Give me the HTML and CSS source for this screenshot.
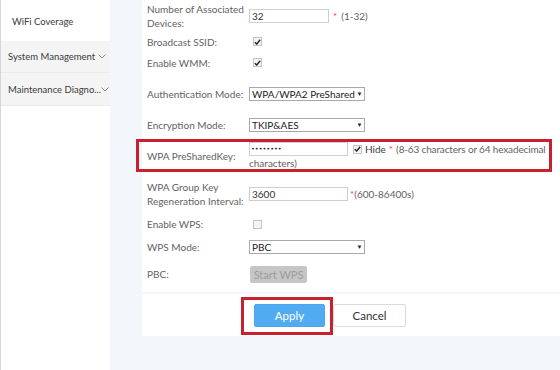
FILE: index.html
```html
<!DOCTYPE html>
<html>
<head>
<meta charset="utf-8">
<link rel="stylesheet" href="styles.css">
</head>
<body>
<div class="app">
  <aside class="sidebar">
    <div class="nav-item nav-sub">WiFi Coverage</div>
    <div class="nav-item nav-group"><span class="nav-text">System Management</span><svg class="chev" viewBox="0 0 8 5" width="8" height="5"><path d="M0.5 0.5 L4 4 L7.5 0.5" fill="none" stroke="#8a8a8a" stroke-width="1"/></svg></div>
    <div class="nav-item nav-group"><span class="nav-text">Maintenance Diagno...</span><svg class="chev" viewBox="0 0 8 5" width="8" height="5"><path d="M0.5 0.5 L4 4 L7.5 0.5" fill="none" stroke="#8a8a8a" stroke-width="1"/></svg></div>
  </aside>
  <main class="main">
    <section class="panel form">
      <div class="row r1">
        <div class="label">Number of Associated<br>Devices:</div>
        <div class="ctrl"><span class="input w80">32</span><span class="req">*</span><span class="hint">(1-32)</span></div>
      </div>
      <div class="row r2">
        <div class="label">Broadcast SSID:</div>
        <div class="ctrl"><span class="cb on"><svg viewBox="0 0 7 6" width="7" height="6"><path d="M0.8 3.2 L2.7 5 L6.2 0.8" fill="none" stroke="#222" stroke-width="1.4"/></svg></span></div>
      </div>
      <div class="row r3">
        <div class="label">Enable WMM:</div>
        <div class="ctrl"><span class="cb on"><svg viewBox="0 0 7 6" width="7" height="6"><path d="M0.8 3.2 L2.7 5 L6.2 0.8" fill="none" stroke="#222" stroke-width="1.4"/></svg></span></div>
      </div>
      <div class="row r4">
        <div class="label">Authentication Mode:</div>
        <div class="ctrl"><span class="select"><span class="sel-text">WPA/WPA2 PreSharedKey</span><span class="arrow">▼</span></span></div>
      </div>
      <div class="row r5">
        <div class="label">Encryption Mode:</div>
        <div class="ctrl"><span class="select"><span class="sel-text">TKIP&amp;AES</span><span class="arrow">▼</span></span></div>
      </div>
      <div class="row r6">
        <div class="label">WPA PreSharedKey:</div>
        <div class="ctrl wrap"><span class="line"><span class="input w99 dots">••••••••</span><span class="cb on small"><svg viewBox="0 0 7 6" width="7" height="6"><path d="M0.8 3.2 L2.7 5 L6.2 0.8" fill="none" stroke="#222" stroke-width="1.4"/></svg></span><span class="hide">Hide</span><span class="req snug">*</span><span class="hint condensed">(8-63 characters or 64 hexadecimal</span></span><span class="line hint">characters)</span></div>
        <div class="annot annot-row"></div>
      </div>
      <div class="row r7">
        <div class="label">WPA Group Key<br>Regeneration Interval:</div>
        <div class="ctrl"><span class="input w99">3600</span><span class="req tight">*</span><span class="hint">(600-86400s)</span></div>
      </div>
      <div class="row r8">
        <div class="label">Enable WPS:</div>
        <div class="ctrl"><span class="cb"></span></div>
      </div>
      <div class="row r9">
        <div class="label">WPS Mode:</div>
        <div class="ctrl"><span class="select"><span class="sel-text">PBC</span><span class="arrow">▼</span></span></div>
      </div>
      <div class="row r10">
        <div class="label">PBC:</div>
        <div class="ctrl"><span class="btn-disabled">Start WPS</span></div>
      </div>
    </section>
    <section class="panel actions">
      <span class="apply-wrap"><span class="btn btn-primary">Apply</span><span class="annot annot-btn"></span></span>
      <span class="btn btn-default">Cancel</span>
    </section>
  </main>
</div>
</body>
</html>
```

FILE: styles.css
```css
html, body {
  margin: 0;
  padding: 0;
  width: 560px;
  height: 370px;
  overflow: hidden;
  background: #f3f6fa;
  font-family: "Lato", "Open Sans", sans-serif;
  font-size: 10px;
  color: #5f5f5f;
}
.app {
  display: flex;
  height: 370px;
}
.sidebar {
  width: 109px;
  flex: none;
  background: #fff;
  border-left: 1px solid #d6d6d6;
  display: flex;
  flex-direction: column;
}
.nav-item {
  display: flex;
  align-items: center;
  color: #3a3a3a;
  white-space: nowrap;
  font-size: 9.5px;
}
.nav-sub {
  height: 41px;
  padding-left: 11px;
  padding-top: 2px;
  box-sizing: border-box;
}
.nav-group {
  height: 31px;
  padding-left: 7px;
  background: #f4f4f4;
  border-bottom: 1px solid #ebebeb;
  justify-content: space-between;
  padding-right: 4px;
}
.nav-group:last-child { height: 32px; }
.chev { flex: none; }
.main {
  flex: 1;
  padding-left: 32px;
  display: flex;
  flex-direction: column;
  gap: 2px;
}
.panel {
  background: #fff;
}
.form {
  display: flex;
  flex-direction: column;
  height: 292px;
  padding-left: 5px;
}
.row {
  display: grid;
  grid-template-columns: 102px 1fr;
  align-items: center;
  position: relative;
}
.r1 { height: 32px; }
.r2 { height: 19px; }
.r3 { height: 23px; }
.r4 { height: 40px; }
.r5 { height: 21px; }
.r6 { height: 42px; }
.r7 { height: 33px; }
.r8 { height: 28px; }
.r9 { height: 18px; }
.r10 { height: 36px; }
.label {
  line-height: 14px;
  color: #626262;
  white-space: nowrap;
}
.ctrl {
  display: flex;
  align-items: center;
  line-height: 14px;
  white-space: nowrap;
}
.ctrl.wrap {
  flex-direction: column;
  align-items: flex-start;
}
.line {
  display: flex;
  align-items: center;
  height: 14px;
}
.input {
  display: inline-block;
  box-sizing: border-box;
  height: 14px;
  border: 1px solid #cfcfcf;
  color: #333;
  line-height: 12px;
  padding-left: 2px;
}
.w80 { width: 80px; }
.w99 { width: 99px; }
.dots {
  font-size: 6.5px;
  letter-spacing: 0;
  color: #222;
  font-family: "DejaVu Sans", sans-serif;
  padding-left: 1px;
}
.req {
  color: #ef4a5a;
  margin: 0 4px 0 4px;
}
.req.snug { margin: 0 3px 0 3px; }
.req.tight { margin: 0 0 0 2px; }
.hint { color: #5f5f5f; }
.hint.condensed { letter-spacing: -0.15px; }
.hide { color: #3a3a3a; margin-left: 3px; }
.cb {
  display: inline-block;
  box-sizing: border-box;
  width: 9px;
  height: 9px;
  margin-left: 4px;
  border: 1px solid #c4c4c4;
  background: #f4f4f4;
  position: relative;
}
.cb svg {
  position: absolute;
  left: 0;
  top: 0.5px;
}
.cb.small { margin-left: 5px; }
.select {
  display: inline-flex;
  align-items: center;
  box-sizing: border-box;
  width: 116px;
  height: 14px;
  border: 1px solid #a9a9a9;
  color: #222;
  padding-left: 2px;
  overflow: hidden;
}
.sel-text {
  flex: 1;
  overflow: hidden;
  white-space: nowrap;
  line-height: 12px;
}
.arrow {
  flex: none;
  font-size: 6px;
  width: 9px;
  text-align: center;
  color: #222;
}
.btn-disabled {
  display: inline-block;
  width: 57px;
  height: 17px;
  line-height: 17px;
  text-align: center;
  background: #c6c6c6;
  color: #9c9c9c;
  font-size: 11px;
  border-radius: 2px;
  margin-left: 1px;
}
.actions {
  flex: none;
  height: 42px;
  box-sizing: border-box;
  padding-top: 10px;
  padding-left: 112px;
  display: flex;
  align-items: flex-start;
  gap: 8px;
}
.apply-wrap {
  position: relative;
  display: inline-block;
}
.btn {
  display: inline-block;
  box-sizing: border-box;
  height: 23px;
  line-height: 21px;
  text-align: center;
  font-size: 11.5px;
  border-radius: 2px;
}
.btn-primary {
  width: 71px;
  background: #51abf1;
  border: 1px solid #4aa6ee;
  color: #fff;
}
.btn-default {
  width: 73px;
  background: #fff;
  border: 1px solid #dadada;
  color: #333;
}
.annot {
  position: absolute;
  border: 3px solid #c8202f;
  box-sizing: border-box;
}
.annot-row {
  left: -11px;
  right: 8px;
  top: 4px;
  bottom: 5px;
}
.annot-btn {
  left: -13px;
  right: -8px;
  top: -7px;
  bottom: -8px;
}
```
